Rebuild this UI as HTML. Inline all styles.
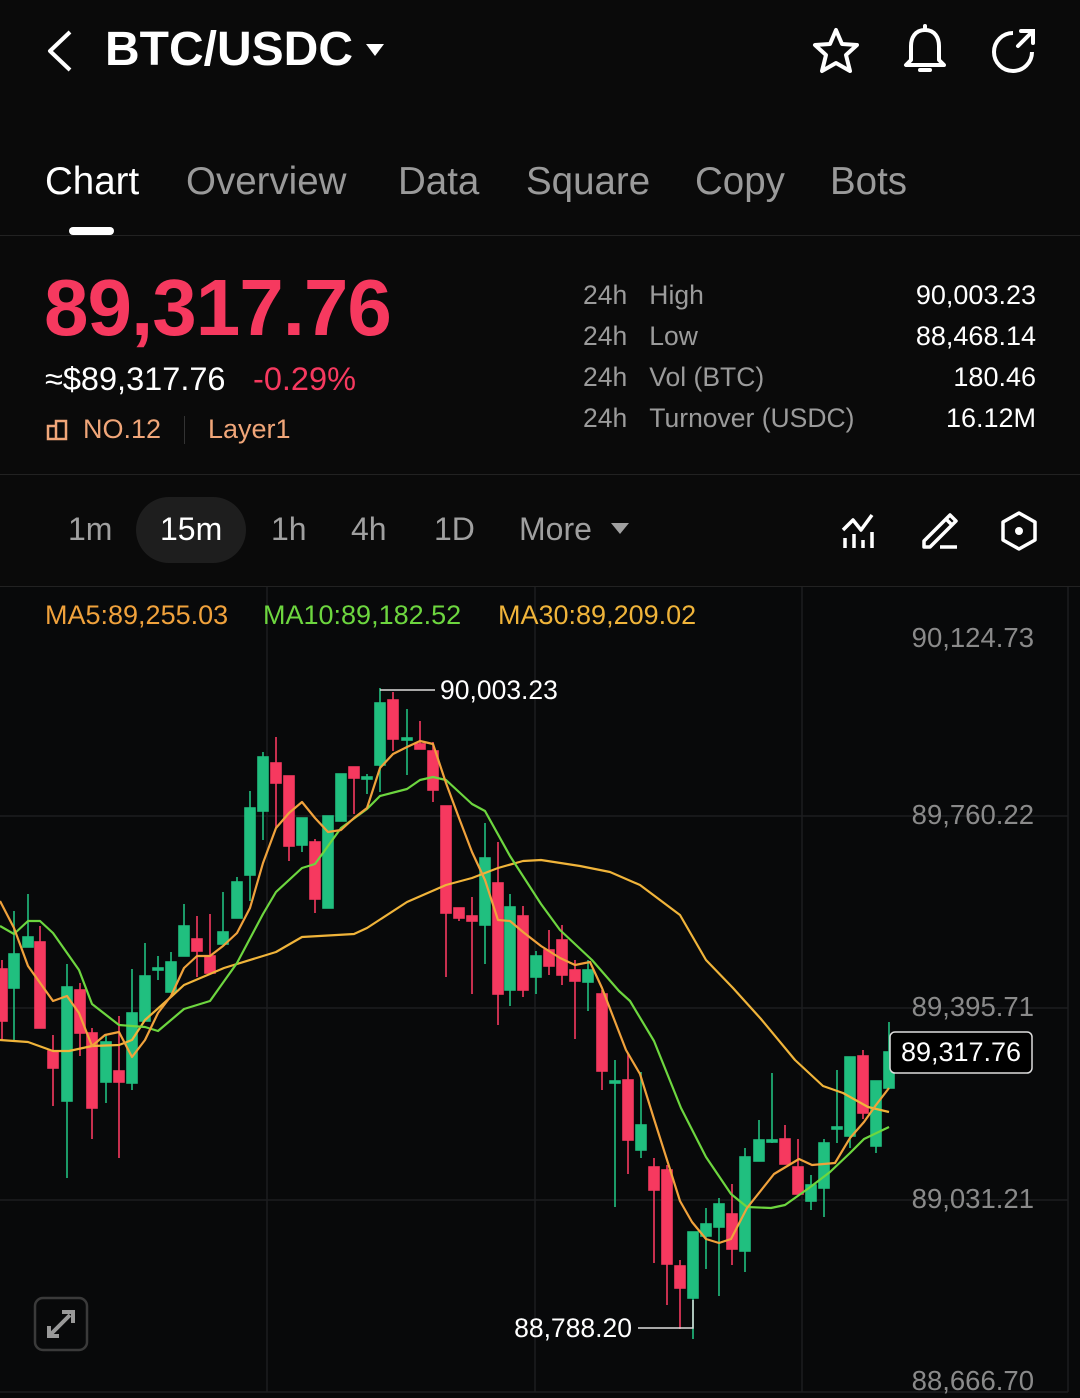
<!DOCTYPE html>
<html><head><meta charset="utf-8">
<style>
*{margin:0;padding:0;box-sizing:border-box}
body{width:1080px;height:1398px;background:#0a0a0a;font-family:"Liberation Sans",sans-serif;color:#fff;position:relative;overflow:hidden}
.abs{position:absolute;white-space:nowrap}
.tab{position:absolute;top:160px;font-size:38.5px;color:#9a9a9a}
.st{position:absolute;font-size:26.5px;color:#9b9b9b}
.sv{position:absolute;right:44px;font-size:27px;color:#fff;text-align:right}
.tf{position:absolute;top:511px;font-size:32px;color:#a0a0a0}
</style></head><body>
<svg class="abs" style="left:40px;top:28px" width="40" height="46" viewBox="0 0 40 46"><path d="M30 4 L10 23 L30 42" fill="none" stroke="#fff" stroke-width="4" stroke-linejoin="round"/></svg>
<div class="abs" style="left:105px;top:22px;font-size:48px;font-weight:bold;letter-spacing:0">BTC/USDC</div>
<svg class="abs" style="left:364px;top:42px" width="22" height="16"><path d="M2 2 L20 2 L11 14 Z" fill="#fff"/></svg>
<svg class="abs" style="left:810px;top:26px" width="52" height="50" viewBox="0 0 52 50"><path d="M26 4 L32 18 L47 19 L36 29 L40 45 L26 37 L12 45 L16 29 L5 19 L20 18 Z" fill="none" stroke="#fff" stroke-width="4" stroke-linejoin="round"/></svg>
<svg class="abs" style="left:900px;top:24px" width="50" height="54" viewBox="0 0 50 54"><path d="M25 6 C15 6 11 14 11 22 L11 36 L6 41 L44 41 L39 36 L39 22 C39 14 35 6 25 6 Z" fill="none" stroke="#fff" stroke-width="4" stroke-linejoin="round"/><path d="M25 2 L25 6 M20 46 L30 46" stroke="#fff" stroke-width="4" stroke-linecap="round"/></svg>
<svg class="abs" style="left:988px;top:26px" width="50" height="50" viewBox="0 0 50 50"><path d="M25 7 A19 19 0 1 0 44 26" fill="none" stroke="#fff" stroke-width="4"/><path d="M30 20 L44 6 M33 5 L45 5 L45 17" fill="none" stroke="#fff" stroke-width="4" stroke-linecap="round"/></svg>
<div class="tab" style="left:45px;color:#fff">Chart</div>
<div class="tab" style="left:186px">Overview</div>
<div class="tab" style="left:398px">Data</div>
<div class="tab" style="left:526px">Square</div>
<div class="tab" style="left:695px">Copy</div>
<div class="tab" style="left:830px">Bots</div>
<div class="abs" style="left:69px;top:227px;width:45px;height:8px;border-radius:4px;background:#fff"></div>
<div class="abs" style="left:0;top:235px;width:1080px;height:1px;background:#222"></div>
<div class="abs" style="left:44px;top:262px;font-size:80px;font-weight:bold;color:#f6395f;letter-spacing:-1px">89,317.76</div>
<div class="abs" style="left:45px;top:361px;font-size:32.5px">≈$89,317.76</div>
<div class="abs" style="left:253px;top:361px;font-size:32.5px;color:#f6395f">-0.29%</div>
<svg class="abs" style="left:46px;top:418px" width="24" height="24" viewBox="0 0 24 24"><path d="M2 8 H10 V21 H2 Z M10 21 V3 H20 V21 H10" fill="none" stroke="#f0a679" stroke-width="2.5"/></svg>
<div class="abs" style="left:83px;top:414px;font-size:27px;color:#f0a679">NO.12</div>
<div class="abs" style="left:184px;top:416px;width:1px;height:28px;background:#333"></div>
<div class="abs" style="left:208px;top:414px;font-size:27px;color:#f0a679">Layer1</div>
<div class="st" style="left:583px;top:280px">24h&nbsp;&nbsp;&nbsp;High</div>
<div class="st" style="left:583px;top:321px">24h&nbsp;&nbsp;&nbsp;Low</div>
<div class="st" style="left:583px;top:362px">24h&nbsp;&nbsp;&nbsp;Vol (BTC)</div>
<div class="st" style="left:583px;top:403px">24h&nbsp;&nbsp;&nbsp;Turnover (USDC)</div>
<div class="sv" style="top:280px">90,003.23</div>
<div class="sv" style="top:321px">88,468.14</div>
<div class="sv" style="top:362px">180.46</div>
<div class="sv" style="top:403px">16.12M</div>
<div class="abs" style="left:0;top:474px;width:1080px;height:1px;background:#222"></div>
<div class="abs" style="left:136px;top:497px;width:110px;height:66px;border-radius:33px;background:#1e1e1e"></div>
<div class="tf" style="left:68px">1m</div>
<div class="tf" style="left:160px;color:#fff">15m</div>
<div class="tf" style="left:271px">1h</div>
<div class="tf" style="left:351px">4h</div>
<div class="tf" style="left:434px">1D</div>
<div class="tf" style="left:519px">More</div>
<svg class="abs" style="left:610px;top:522px" width="20" height="14"><path d="M1 1 L19 1 L10 12 Z" fill="#a0a0a0"/></svg>
<svg class="abs" style="left:840px;top:512px" width="40" height="38" viewBox="0 0 40 38"><path d="M3 18 L13 8 L21 18 L32 3" fill="none" stroke="#fff" stroke-width="3.5" stroke-linejoin="round"/><path d="M5 26 V36 M14 22 V36 M23 28 V36 M32 20 V36" stroke="#fff" stroke-width="3.5"/></svg>
<svg class="abs" style="left:920px;top:510px" width="40" height="40" viewBox="0 0 40 40"><path d="M4 31 L4 37 L10 37 L32 15 L26 9 Z M26 9 L30 5 L36 11 L32 15" fill="none" stroke="#fff" stroke-width="3.5" stroke-linejoin="round"/><path d="M20 37 H37" stroke="#fff" stroke-width="3.5"/></svg>
<svg class="abs" style="left:999px;top:510px" width="40" height="42" viewBox="0 0 40 42"><path d="M20 3 L36 12 L36 30 L20 39 L4 30 L4 12 Z" fill="none" stroke="#fff" stroke-width="3.5" stroke-linejoin="round"/><circle cx="20" cy="21" r="4" fill="#fff"/></svg>
<div class="abs" style="left:0;top:586px;width:1080px;height:812px;background:#08090a;border-top:1px solid #222"></div>
<svg class="abs" style="left:0;top:0" width="1080" height="1398" viewBox="0 0 1080 1398">
<g stroke="#1c1e20" stroke-width="1.5">
<line x1="0" y1="816" x2="1068" y2="816"/><line x1="0" y1="1008" x2="1068" y2="1008"/><line x1="0" y1="1200" x2="1068" y2="1200"/><line x1="0" y1="1392" x2="1068" y2="1392"/>
<line x1="267" y1="587" x2="267" y2="1392"/><line x1="535" y1="587" x2="535" y2="1392"/><line x1="802" y1="587" x2="802" y2="1392"/><line x1="1068" y1="587" x2="1068" y2="1392"/>
</g>
<g font-family="Liberation Sans, sans-serif" font-size="27.5" fill="#8a8a8a" text-anchor="end">
<text x="1034" y="647">90,124.73</text><text x="1034" y="824">89,760.22</text><text x="1034" y="1016">89,395.71</text><text x="1034" y="1208">89,031.21</text><text x="1034" y="1390">88,666.70</text>
</g>
<g font-family="Liberation Sans, sans-serif" font-size="27">
<text x="45" y="624" fill="#f0a23c">MA5:89,255.03</text>
<text x="263" y="624" fill="#6dd63f">MA10:89,182.52</text>
<text x="498" y="624" fill="#f0b43a">MA30:89,209.02</text>
</g>
<g stroke-width="1.6">
<g fill="#f6395f" stroke="#f6395f">
<line x1="2" y1="960" x2="2" y2="1040"/><rect x="-3" y="969" width="10" height="52"/>
<line x1="40" y1="926" x2="40" y2="1028"/><rect x="35" y="942" width="10" height="86"/>
<line x1="53" y1="1035" x2="53" y2="1106"/><rect x="48" y="1051" width="10" height="17"/>
<line x1="80" y1="983" x2="80" y2="1056"/><rect x="75" y="990" width="10" height="43"/>
<line x1="92" y1="1028" x2="92" y2="1139"/><rect x="87" y="1033" width="10" height="75"/>
<line x1="119" y1="1016" x2="119" y2="1158"/><rect x="114" y="1071" width="10" height="11"/>
<line x1="197" y1="916" x2="197" y2="977"/><rect x="192" y="939" width="10" height="12"/>
<line x1="210" y1="914" x2="210" y2="973"/><rect x="205" y="956" width="10" height="17"/>
<line x1="276" y1="737" x2="276" y2="828"/><rect x="271" y="763" width="10" height="20"/>
<line x1="289" y1="776" x2="289" y2="861"/><rect x="284" y="776" width="10" height="70"/>
<line x1="315" y1="839" x2="315" y2="913"/><rect x="310" y="842" width="10" height="57"/>
<line x1="354" y1="767" x2="354" y2="814"/><rect x="349" y="767" width="10" height="11"/>
<line x1="393" y1="692" x2="393" y2="751"/><rect x="388" y="700" width="10" height="39"/>
<line x1="420" y1="721" x2="420" y2="749"/><rect x="415" y="744" width="10" height="5"/>
<line x1="433" y1="742" x2="433" y2="802"/><rect x="428" y="751" width="10" height="39"/>
<line x1="446" y1="806" x2="446" y2="977"/><rect x="441" y="806" width="10" height="107"/>
<line x1="459" y1="908" x2="459" y2="921"/><rect x="454" y="908" width="10" height="10"/>
<line x1="472" y1="897" x2="472" y2="994"/><rect x="467" y="916" width="10" height="5"/>
<line x1="498" y1="842" x2="498" y2="1025"/><rect x="493" y="883" width="10" height="111"/>
<line x1="523" y1="906" x2="523" y2="997"/><rect x="518" y="916" width="10" height="74"/>
<line x1="549" y1="930" x2="549" y2="975"/><rect x="544" y="950" width="10" height="16"/>
<line x1="562" y1="925" x2="562" y2="985"/><rect x="557" y="940" width="10" height="35"/>
<line x1="575" y1="960" x2="575" y2="1039"/><rect x="570" y="970" width="10" height="11"/>
<line x1="602" y1="990" x2="602" y2="1090"/><rect x="597" y="994" width="10" height="77"/>
<line x1="628" y1="1053" x2="628" y2="1174"/><rect x="623" y="1080" width="10" height="60"/>
<line x1="654" y1="1158" x2="654" y2="1263"/><rect x="649" y="1167" width="10" height="23"/>
<line x1="667" y1="1165" x2="667" y2="1305"/><rect x="662" y="1170" width="10" height="94"/>
<line x1="680" y1="1260" x2="680" y2="1329"/><rect x="675" y="1266" width="10" height="22"/>
<line x1="732" y1="1184" x2="732" y2="1265"/><rect x="727" y="1214" width="10" height="35"/>
<line x1="785" y1="1125" x2="785" y2="1164"/><rect x="780" y="1139" width="10" height="25"/>
<line x1="798" y1="1139" x2="798" y2="1194"/><rect x="793" y="1167" width="10" height="27"/>
<line x1="863" y1="1050" x2="863" y2="1119"/><rect x="858" y="1056" width="10" height="57"/>
</g>
<g fill="#20bf7f" stroke="#20bf7f">
<line x1="14" y1="911" x2="14" y2="1040"/><rect x="9" y="954" width="10" height="34"/>
<line x1="28" y1="894" x2="28" y2="947"/><rect x="23" y="937" width="10" height="10"/>
<line x1="67" y1="964" x2="67" y2="1178"/><rect x="62" y="987" width="10" height="114"/>
<line x1="106" y1="1035" x2="106" y2="1103"/><rect x="101" y="1042" width="10" height="40"/>
<line x1="132" y1="969" x2="132" y2="1090"/><rect x="127" y="1013" width="10" height="70"/>
<line x1="145" y1="943" x2="145" y2="1021"/><rect x="140" y="976" width="10" height="45"/>
<line x1="158" y1="956" x2="158" y2="980"/><rect x="153" y="968" width="10" height="2"/>
<line x1="171" y1="952" x2="171" y2="992"/><rect x="166" y="962" width="10" height="30"/>
<line x1="184" y1="904" x2="184" y2="956"/><rect x="179" y="926" width="10" height="30"/>
<line x1="223" y1="892" x2="223" y2="944"/><rect x="218" y="932" width="10" height="12"/>
<line x1="237" y1="877" x2="237" y2="918"/><rect x="232" y="882" width="10" height="36"/>
<line x1="250" y1="791" x2="250" y2="901"/><rect x="245" y="808" width="10" height="67"/>
<line x1="263" y1="752" x2="263" y2="840"/><rect x="258" y="757" width="10" height="54"/>
<line x1="302" y1="818" x2="302" y2="852"/><rect x="297" y="818" width="10" height="27"/>
<line x1="328" y1="816" x2="328" y2="908"/><rect x="323" y="816" width="10" height="92"/>
<line x1="341" y1="774" x2="341" y2="821"/><rect x="336" y="774" width="10" height="47"/>
<line x1="367" y1="774" x2="367" y2="794"/><rect x="362" y="777" width="10" height="2"/>
<line x1="380" y1="688" x2="380" y2="792"/><rect x="375" y="703" width="10" height="62"/>
<line x1="407" y1="709" x2="407" y2="775"/><rect x="402" y="738" width="10" height="2"/>
<line x1="485" y1="823" x2="485" y2="964"/><rect x="480" y="858" width="10" height="67"/>
<line x1="510" y1="894" x2="510" y2="1006"/><rect x="505" y="907" width="10" height="83"/>
<line x1="536" y1="951" x2="536" y2="994"/><rect x="531" y="956" width="10" height="21"/>
<line x1="588" y1="960" x2="588" y2="1011"/><rect x="583" y="970" width="10" height="12"/>
<line x1="615" y1="1060" x2="615" y2="1207"/><rect x="610" y="1081" width="10" height="2"/>
<line x1="641" y1="1072" x2="641" y2="1158"/><rect x="636" y="1125" width="10" height="25"/>
<line x1="693" y1="1232" x2="693" y2="1339"/><rect x="688" y="1232" width="10" height="66"/>
<line x1="706" y1="1208" x2="706" y2="1269"/><rect x="701" y="1224" width="10" height="12"/>
<line x1="719" y1="1198" x2="719" y2="1296"/><rect x="714" y="1204" width="10" height="23"/>
<line x1="745" y1="1148" x2="745" y2="1272"/><rect x="740" y="1157" width="10" height="94"/>
<line x1="759" y1="1120" x2="759" y2="1161"/><rect x="754" y="1140" width="10" height="21"/>
<line x1="772" y1="1073" x2="772" y2="1143"/><rect x="767" y="1140" width="10" height="2"/>
<line x1="811" y1="1175" x2="811" y2="1210"/><rect x="806" y="1185" width="10" height="16"/>
<line x1="824" y1="1139" x2="824" y2="1217"/><rect x="819" y="1143" width="10" height="45"/>
<line x1="837" y1="1070" x2="837" y2="1143"/><rect x="832" y="1127" width="10" height="2"/>
<line x1="850" y1="1057" x2="850" y2="1148"/><rect x="845" y="1057" width="10" height="79"/>
<line x1="876" y1="1081" x2="876" y2="1153"/><rect x="871" y="1081" width="10" height="65"/>
<line x1="889" y1="1022" x2="889" y2="1088"/><rect x="884" y="1052" width="10" height="36"/>
</g>
</g>
<g fill="none" stroke-width="2.2" stroke-linejoin="round">
<polyline stroke="#f0b43a" points="0,1040 28,1042 53,1051 69,1051 92,1046 119,1045 132,1040 145,1020 172,996 184,985 224,968 263,956 276,952 302,937 354,934 367,928 407,902 446,885 472,878 498,868 523,861 541,860 580,866 610,872 640,885 680,915 706,960 733,988 761,1019 795,1060 823,1086 843,1093 868,1107 889,1112"/>
<polyline stroke="#6dd63f" points="0,926 14,934 28,921 40,921 53,933 79,970 92,1004 119,1025 145,1027 158,1031 184,1009 210,1001 237,963 263,914 276,892 302,868 315,864 341,828 367,809 380,796 407,789 420,780 433,777 446,780 472,804 485,811 510,856 541,904 560,930 592,960 619,991 630,1001 654,1041 681,1108 706,1157 731,1194 747,1207 771,1208 785,1205 809,1188 830,1172 850,1153 864,1139 889,1127"/>
<polyline stroke="#f0a23c" points="0,901 14,928 28,966 53,1001 67,996 79,1013 92,1046 105,1035 119,1032 132,1057 145,1040 158,1013 171,996 184,968 197,956 210,956 223,946 237,933 250,908 263,863 276,828 289,813 302,802 315,818 328,832 341,830 354,818 367,808 380,768 393,754 407,747 420,741 433,744 446,783 459,818 472,852 485,880 498,920 510,921 523,932 541,946 560,958 575,965 590,962 602,988 626,1050 640,1074 654,1119 668,1163 680,1201 692,1222 706,1239 719,1243 731,1239 747,1208 774,1174 799,1159 812,1165 835,1163 850,1138 864,1122 876,1105 889,1088"/>
</g>
<g stroke="#ddd" stroke-width="1.5" fill="none">
<polyline points="380,690 435,690"/>
<polyline points="693,1300 693,1328 638,1328"/>
</g>
<g font-family="Liberation Sans, sans-serif" font-size="26.5" fill="#fff">
<text x="440" y="699">90,003.23</text>
<text x="632" y="1337" text-anchor="end">88,788.20</text>
</g>
<rect x="890" y="1032" width="142" height="41" rx="5" fill="#000" stroke="#ddd" stroke-width="1.5"/>
<text x="961" y="1061" text-anchor="middle" font-family="Liberation Sans, sans-serif" font-size="27" fill="#fff">89,317.76</text>
<rect x="35" y="1298" width="52" height="52" rx="8" fill="none" stroke="#3a3a3a" stroke-width="2.5"/>
<path d="M50 1335 L70 1315 M49 1326 L49 1336 L59 1336 M62 1312 L73 1312 L73 1323" stroke="#999" stroke-width="4" fill="none"/>
</svg>
</body></html>
